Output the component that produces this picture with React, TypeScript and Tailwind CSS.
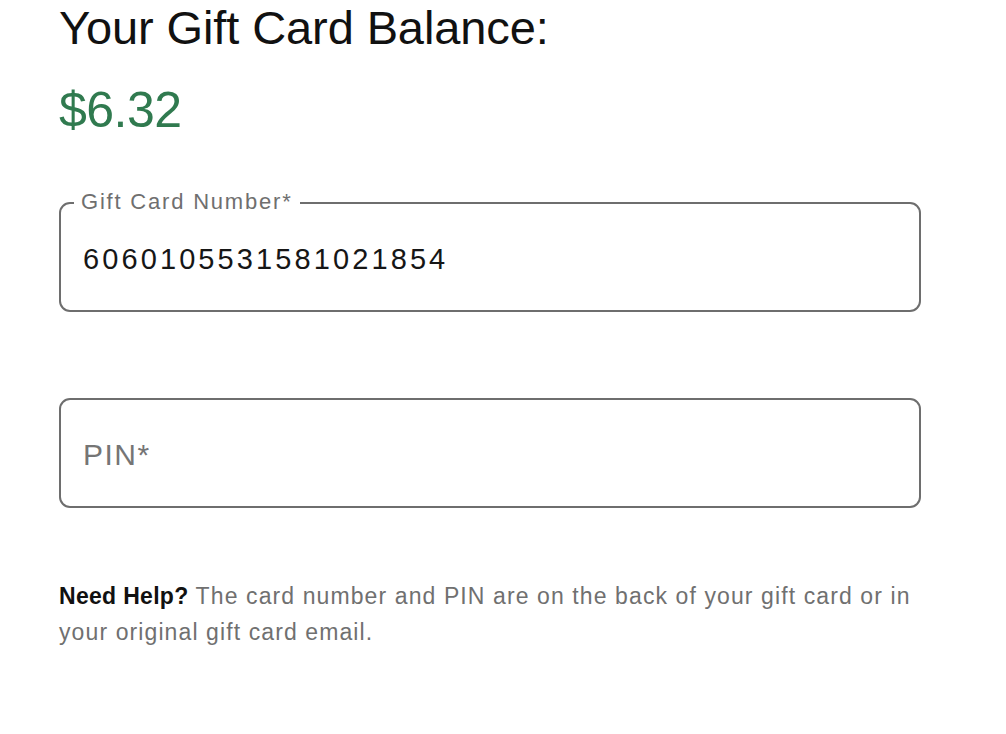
import React from "react";

const font = { fontFamily: '"Liberation Sans", Arial, sans-serif' };

function OutlinedField({ label, value }: { label: string; value?: string }) {
  return (
    <div className="relative h-[110px] rounded-[11px] border-[2px] border-[#6e6e6e] flex items-center pl-[22px]">
      {value ? (
        <>
          <span className="absolute left-[13px] top-[-14px] bg-white px-[7px] text-[22px] leading-[24px] tracking-[1.8px] text-[#6f6f6f]">
            {label}
          </span>
          <span className="mt-[3px] text-[29px] leading-[32px] tracking-[3.1px] text-[#161616]">
            {value}
          </span>
        </>
      ) : (
        <span className="mt-[3px] text-[30px] leading-[32px] tracking-[1.5px] text-[#757575]">
          {label}
        </span>
      )}
    </div>
  );
}

export default function App() {
  return (
    <div className="min-h-[734px] w-[1006px] bg-white" style={font}>
      <div className="w-[862px] ml-[59px] pt-[4px]">
        <h1 className="text-[47px] leading-[48px] text-[#111] tracking-[-0.1px]">
          Your Gift Card Balance:
        </h1>
        <p className="mt-[33px] text-[50px] leading-[50px] text-[#307a4f] tracking-[-0.5px]">
          $6.32
        </p>
        <div className="mt-[67px]">
          <OutlinedField label="Gift Card Number*" value="6060105531581021854" />
        </div>
        <div className="mt-[86px]">
          <OutlinedField label="PIN*" />
        </div>
        <p className="mt-[70px] text-[23px] leading-[36px] text-[#707070] tracking-[1.1px]">
          <span className="font-bold text-[#111] tracking-[0.3px]">Need Help?</span> The card number
          and PIN are on the back of your gift card or in your original gift card email.
        </p>
      </div>
    </div>
  );
}
